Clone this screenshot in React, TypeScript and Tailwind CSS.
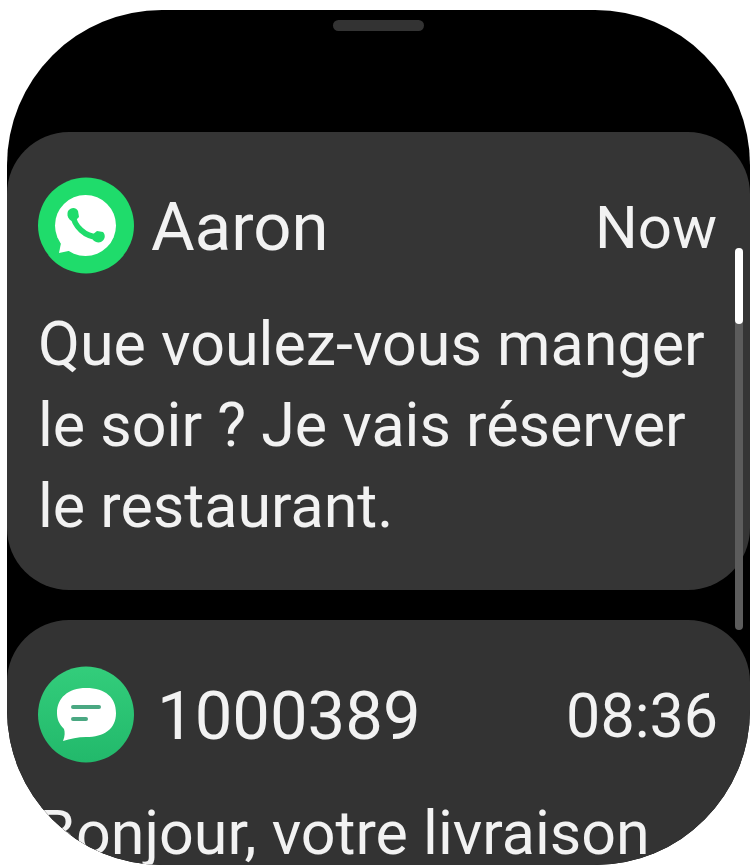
const WhatsAppIcon = () => (
  <svg width="96" height="97" viewBox="0 0 96 97" className="shrink-0">
    <circle cx="48" cy="48.5" r="48" fill="#1fdc6b" />
    <circle cx="47.5" cy="48.5" r="30.5" fill="#ffffff" />
    <path d="M21 76 L25 56 L40 72 Z" fill="#ffffff" />
    <path d="M35 38 C36 49 47 60 60 60" fill="none" stroke="#1fdc6b" strokeWidth="5.5" />
    <path d="M30 34 C33 30 38 30 40 34 L41 40 L36 45 L32 43 C29 40 29 37 30 34 Z" fill="#1fdc6b" />
    <path d="M54 58 L59 54 L65 55 C68 58 67 63 63 65 C60 66 57 65 55 63 Z" fill="#1fdc6b" />
  </svg>
);

const MessageIcon = () => (
  <svg width="96" height="97" viewBox="0 0 96 97" className="shrink-0">
    <defs>
      <linearGradient id="msg" x1="0" y1="0" x2="0" y2="1">
        <stop offset="0" stopColor="#33cd7b" />
        <stop offset="1" stopColor="#22b96b" />
      </linearGradient>
    </defs>
    <circle cx="48" cy="48.5" r="48" fill="url(#msg)" />
    <path d="M48 22 C68 22 78 32 78 47 C78 63 66 71 48 71 C40 71 32 73 25 75 C27 70 27 66 26 63 C21 58 19 53 19 47 C19 32 30 22 48 22 Z" fill="#ffffff" />
    <path d="M35 41 H61 M35 53 H48" fill="none" stroke="#4aa882" strokeWidth="4" strokeLinecap="round" />
  </svg>
);

export default function App() {
  return (
    <div className="w-[756px] h-[867px] bg-white pl-[7px] pr-[6px] pt-[10px] overflow-hidden font-['Roboto',sans-serif] text-[#f2f2f2]">
      <div className="relative h-[855px] rounded-[155px] overflow-hidden bg-black flex flex-col blur-[0.5px]">
        <div className="mt-[10px] mb-[101px] mx-auto w-[91px] h-[11px] shrink-0 rounded-full bg-[#333333]" />

        <div className="shrink-0 h-[458px] rounded-[62px] bg-[#353535] pt-[45px] pl-[31px] pr-[33px]">
          <div className="flex items-center h-[97px]">
            <WhatsAppIcon />
            <span className="ml-[17px] pt-[4px] text-[67px] leading-none">Aaron</span>
            <span className="ml-auto pt-[4px] text-[60px] leading-none">Now</span>
          </div>
          <p className="mt-[30px] text-[61px] leading-[81px] whitespace-nowrap">
            Que voulez-vous manger
            <br />
            le soir ? Je vais réserver
            <br />
            le restaurant.
          </p>
        </div>

        <div className="mt-[30px] shrink-0 h-[400px] rounded-[62px] bg-[#333333] pt-[46px] pl-[31px] pr-[32px]">
          <div className="flex items-center h-[97px]">
            <MessageIcon />
            <span className="ml-[23px] pt-[4px] text-[67px] leading-none">1000389</span>
            <span className="ml-auto pt-[4px] text-[61px] leading-none">08:36</span>
          </div>
          <p className="mt-[30px] text-[61px] leading-[81px] whitespace-nowrap">Bonjour, votre livraison</p>
        </div>

        <div className="absolute left-[728px] top-[238px] w-[8px] h-[382px] rounded-full bg-[#5c5c5c]">
          <div className="w-[8px] h-[76px] rounded-full bg-white" />
        </div>
      </div>
    </div>
  );
}
